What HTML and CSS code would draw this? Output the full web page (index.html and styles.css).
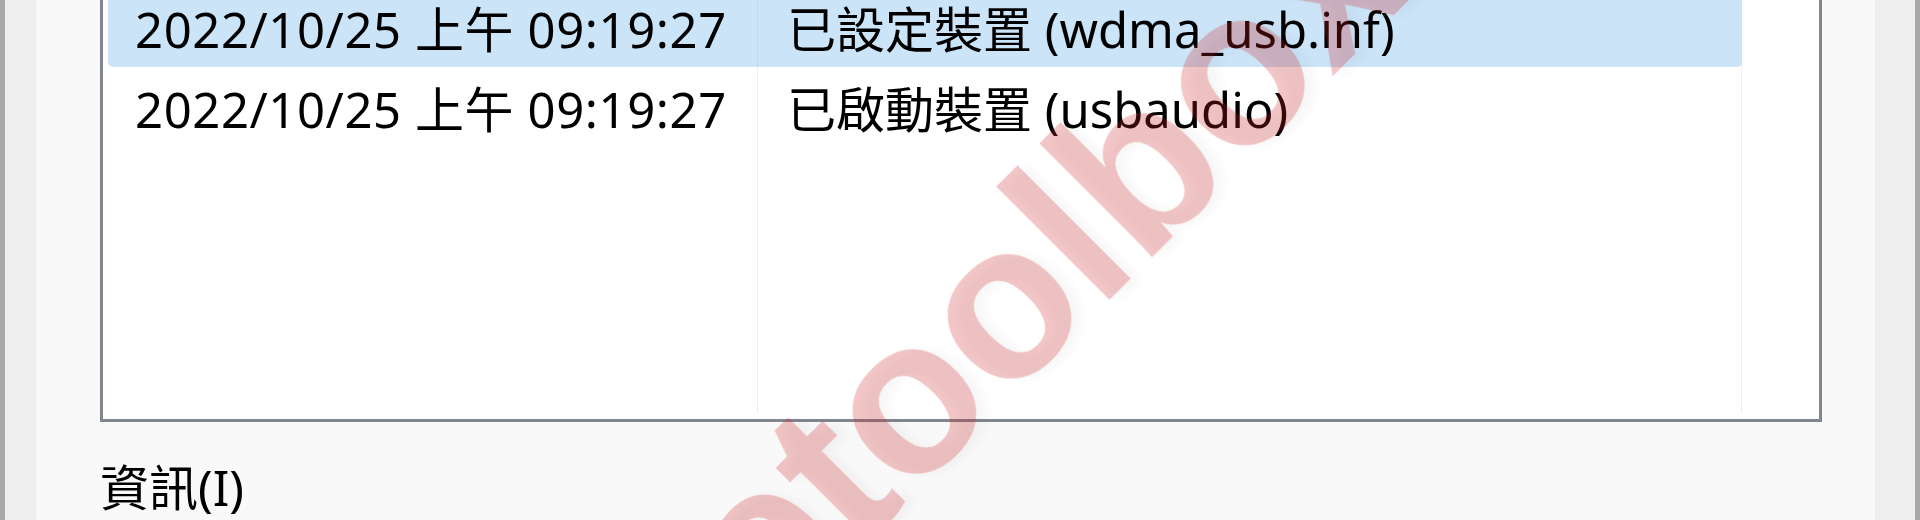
FILE: index.html
```html
<!DOCTYPE html>
<html lang="zh-Hant">
<head>
<meta charset="utf-8">
<title>裝置事件</title>
<link rel="stylesheet" href="styles.css">
</head>
<body>
<div class="screen">
  <div class="edge"></div>
  <div class="side side-left"></div>
  <main class="dialog">
    <div class="listbox">
      <div class="list-body">
        <div class="row selected">
          <div class="cell c1">2022/10/25 上午 09:19:27</div>
          <div class="cell c2">已設定裝置 (wdma_usb.inf)</div>
        </div>
        <div class="row">
          <div class="cell c1">2022/10/25 上午 09:19:27</div>
          <div class="cell c2">已啟動裝置 (usbaudio)</div>
        </div>
      </div>
    </div>
    <div class="label">資訊(I)</div>
  </main>
  <div class="side side-right"></div>
  <div class="edge"></div>
  <svg class="watermark" width="1920" height="520" viewBox="0 0 1920 520" aria-hidden="true">
    <text x="770" y="639" transform="rotate(-45 770 639)">etoolbox</text>
  </svg>
</div>
</body>
</html>
```

FILE: styles.css
```css
html, body {
  margin: 0;
  padding: 0;
}

body {
  font-family: "Noto Sans", "Noto Sans CJK TC", sans-serif;
  color: #000;
  background: #f9f9f9;
}

.screen {
  position: relative;
  display: flex;
  width: 1920px;
  height: 520px;
  overflow: hidden;
  background: #f9f9f9;
}

.edge {
  width: 5px;
  flex: none;
  background: #a9a9a9;
}

.side {
  flex: none;
  background: #efefef;
  box-sizing: border-box;
}

.side-left {
  width: 31px;
  border-right: 1px solid #ebebeb;
}

.side-right {
  width: 40px;
  border-left: 1px solid #ebebeb;
}

.dialog {
  flex: 1;
  display: flex;
  flex-direction: column;
  padding-left: 64px;
  padding-right: 53px;
}

.listbox {
  margin-top: -21px;
  height: 443px;
  box-sizing: border-box;
  border: 3px solid #82868e;
  background: #fff;
  padding: 5px 5px 6px 5px;
  display: flex;
  flex-direction: column;
}

.list-body {
  flex: 1;
  width: 1634px;
  background:
    linear-gradient(to right,
      transparent 649px, #e6f0fc 649px, #e6f0fc 650px, transparent 650px,
      transparent 1633px, #e6f0fc 1633px, #e6f0fc 1634px, transparent 1634px);
}

.row {
  display: grid;
  grid-template-columns: 650px 984px;
  height: 80px;
  font-size: 49px;
  line-height: 84px;
  white-space: nowrap;
}

.row.selected {
  background: #cce4f8;
  border-radius: 5px;
}

.cell {
  overflow: hidden;
  box-sizing: border-box;
}

.c1 {
  padding-left: 27px;
  letter-spacing: 0.6px;
}

.c2 {
  padding-left: 29px;
}

.row.selected .c1 {
  border-right: 1px solid #bcd9f3;
}

.label {
  margin-top: 35px;
  font-size: 49px;
  line-height: 60px;
}

.watermark {
  position: absolute;
  left: 0;
  top: 0;
  pointer-events: none;
}

.watermark text {
  font-family: "Liberation Sans", sans-serif;
  font-weight: bold;
  font-size: 220px;
  fill: rgba(205, 35, 35, 0.26);
  filter: drop-shadow(7px 7px 5px rgba(0, 0, 0, 0.12));
}
```
